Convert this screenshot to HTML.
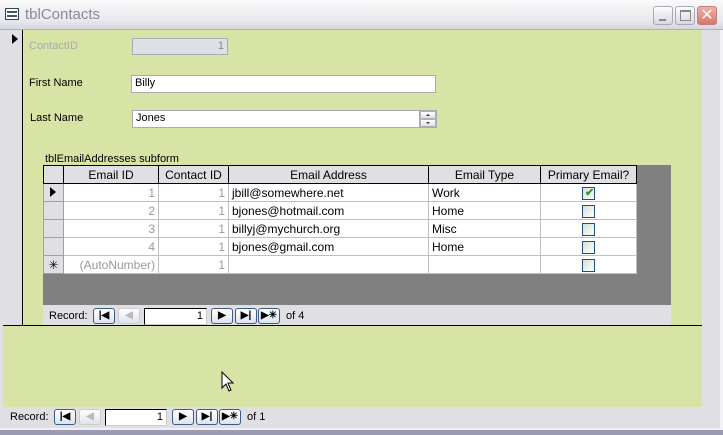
<!DOCTYPE html><html><head><style>
*{margin:0;padding:0;box-sizing:border-box}
body{width:723px;height:435px;position:relative;overflow:hidden;background:#e0dfe3;font-family:"Liberation Sans",sans-serif;font-size:11px;color:#000}
.a{position:absolute}
.tb{left:0;top:0;width:723px;height:30px;background:linear-gradient(#fafafa,#e8e8ee 70%,#d6d6de);border-bottom:1px solid #b0b0c0}
.green{background:#d8e3a6}
.box{position:absolute;background:#fff;border:1px solid #a5acb5;padding:1px 3px;font-size:11px;line-height:13px}
.lbl{position:absolute;font-size:11px}
table{border-collapse:collapse;font-size:12px}
td{border:1px solid #c0c0c0;height:18px;padding:0 3px;background:#fff;white-space:nowrap}
th{border:1px solid #000;background:#e0dfe3;font-weight:normal;height:18px;padding:0}
td.sel{background:#e0dfe3;border-color:#a0a0a0}
.g{color:#999;text-align:right}
.cb{display:inline-block;width:13px;height:13px;border:1px solid #1c5180;background:linear-gradient(135deg,#dcdcd6,#fff);vertical-align:middle;position:relative}
.nb{position:absolute;height:16px;border:1px solid #3c5a84;border-radius:3px;background:linear-gradient(#fff,#dde4ee);font-size:10px;text-align:center;line-height:14px;font-weight:bold}
.wb{position:absolute;top:6px;width:20px;height:19px;border:1px solid #a8a8b8;border-radius:3px;background:linear-gradient(#fdfdfd,#d8d8e0)}
.sp{position:absolute;left:0;width:16px;height:8px;border:1px solid #b0b0b8;background:linear-gradient(#fff,#e0e0e6)}
</style></head><body>
<div class="a tb"></div>
<div class="a" style="left:5px;top:8px;width:14px;height:12px;border:1px solid #345;background:#fff"><div style="margin:2px 1px;height:6px;border-top:2px solid #456;border-bottom:2px solid #456"></div></div>
<div class="a" style="left:25px;top:6px;font-size:15px;color:#8a8a98">tblContacts</div>
<div class="wb" style="left:653px"><div style="position:absolute;left:5px;top:12px;width:7px;height:2px;background:#888"></div></div>
<div class="wb" style="left:675px"><div style="position:absolute;left:4px;top:3px;width:11px;height:11px;border:1px solid #888;border-top-width:2px"></div></div>
<div class="wb" style="left:697px;background:linear-gradient(#f0b0a8,#d87868);border-color:#c08080;color:#fff;font-size:16px;text-align:center;line-height:18px">✕</div>
<div class="a" style="left:3px;top:30px;width:20px;height:296px;background:#e0dfe3;border-right:1px solid #000"></div>
<div class="a" style="left:12px;top:34px;width:0;height:0;border-left:6px solid #000;border-top:5px solid transparent;border-bottom:5px solid transparent"></div>
<div class="a green" style="left:24px;top:30px;width:678px;height:295px"></div>
<div class="a green" style="left:3px;top:326px;width:699px;height:81px"></div>
<div class="a" style="left:3px;top:325px;width:699px;height:1px;background:#000"></div>
<div class="lbl" style="left:29px;top:40px;color:#aaa">ContactID</div>
<div class="box" style="left:132px;top:38px;width:96px;height:17px;background:#e0dfe3;color:#888;text-align:right">1</div>
<div class="lbl" style="left:29px;top:77px">First Name</div>
<div class="box" style="left:131px;top:75px;width:305px;height:18px">Billy</div>
<div class="lbl" style="left:30px;top:112px">Last Name</div>
<div class="box" style="left:132px;top:110px;width:288px;height:18px">Jones</div>
<div class="a" style="left:420px;top:110px;width:17px;height:18px;background:#a5acb5;">
<div class="sp" style="top:1px;left:0"><div style="margin:2px auto 0;width:0;height:0;border-left:2px solid transparent;border-right:2px solid transparent;border-bottom:2px solid #333"></div></div>
<div class="sp" style="top:9px;left:0"><div style="margin:2px auto 0;width:0;height:0;border-left:2px solid transparent;border-right:2px solid transparent;border-top:2px solid #333"></div></div>
</div>
<div class="lbl" style="left:45px;top:153px">tblEmailAddresses subform</div>
<div class="a" style="left:43px;top:165px;width:628px;height:140px;background:#808080"></div>
<div class="a" style="left:43px;top:305px;width:628px;height:20px;background:#e0dfe3"></div>
<div class="a" style="left:43px;top:165px">
<table>
<tr><th style="width:20px"></th><th style="width:95px">Email ID</th><th style="width:70px">Contact ID</th><th style="width:200px">Email Address</th><th style="width:112px">Email Type</th><th style="width:96px">Primary Email?</th></tr>
<tr><td class="sel"><span style="display:inline-block;border-left:6px solid #000;border-top:5px solid transparent;border-bottom:5px solid transparent;margin-left:3px"></span></td><td class="g">1</td><td class="g">1</td><td>jbill@somewhere.net</td><td>Work</td><td style="text-align:center"><span class="cb"><span style="position:absolute;left:2px;top:-2px;color:#2a9a2a;font-size:11px;font-weight:bold">✔</span></span></td></tr>
<tr><td class="sel"></td><td class="g">2</td><td class="g">1</td><td>bjones@hotmail.com</td><td>Home</td><td style="text-align:center"><span class="cb"></span></td></tr>
<tr><td class="sel"></td><td class="g">3</td><td class="g">1</td><td>billyj@mychurch.org</td><td>Misc</td><td style="text-align:center"><span class="cb"></span></td></tr>
<tr><td class="sel"></td><td class="g">4</td><td class="g">1</td><td>bjones@gmail.com</td><td>Home</td><td style="text-align:center"><span class="cb"></span></td></tr>
<tr><td class="sel" style="text-align:center">✳</td><td class="g">(AutoNumber)</td><td class="g">1</td><td></td><td></td><td style="text-align:center"><span class="cb"></span></td></tr>
</table></div>
<div class="lbl" style="left:49px;top:310px">Record:</div>
<div class="nb" style="left:93px;top:308px;width:22px">|◀</div>
<div class="nb" style="left:118px;top:308px;width:22px;border-color:#ccc;color:#bbb">◀</div>
<div class="box" style="left:144px;top:308px;width:63px;height:17px;border-color:#000 #ccc #ccc #000;text-align:right">1</div>
<div class="nb" style="left:211px;top:308px;width:22px">▶</div>
<div class="nb" style="left:235px;top:308px;width:22px">▶|</div>
<div class="nb" style="left:258px;top:308px;width:22px">▶✳</div>
<div class="lbl" style="left:286px;top:310px">of 4</div>
<svg class="a" style="left:221px;top:371px" width="14" height="22"><path d="M1 1 L1 17 L5 13 L8 20 L10 19 L7 12 L12 12 Z" fill="#fff" stroke="#000"/></svg>
<div class="lbl" style="left:10px;top:411px">Record:</div>
<div class="nb" style="left:54px;top:409px;width:22px">|◀</div>
<div class="nb" style="left:79px;top:409px;width:22px;border-color:#ccc;color:#bbb">◀</div>
<div class="box" style="left:105px;top:409px;width:62px;height:17px;border-color:#000 #ccc #ccc #000;text-align:right">1</div>
<div class="nb" style="left:172px;top:409px;width:22px">▶</div>
<div class="nb" style="left:196px;top:409px;width:22px">▶|</div>
<div class="nb" style="left:219px;top:409px;width:22px">▶✳</div>
<div class="lbl" style="left:247px;top:411px">of 1</div>
<div class="a" style="left:0;top:428px;width:723px;height:7px;background:#9c9ab4;border-top:2px solid #f0f0f4"></div>
<div class="a" style="left:720px;top:30px;width:3px;height:400px;background:#f4f4f8"></div>
</body></html>
